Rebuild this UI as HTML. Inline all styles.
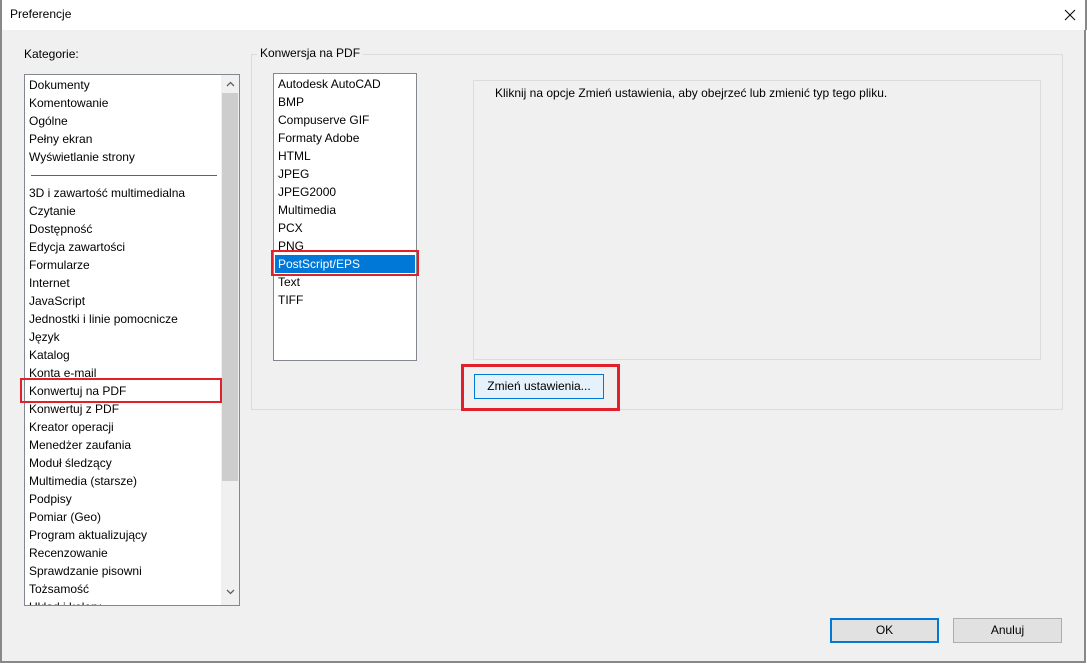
<!DOCTYPE html><html><head><style>
body{margin:0;width:1087px;height:664px;background:#fff;font-family:"Liberation Sans",sans-serif;font-size:12px;color:#000;position:relative;overflow:hidden}
div{position:absolute;box-sizing:border-box}
.it{position:absolute;left:4px;height:18px;line-height:18px;white-space:nowrap}
</style></head><body>
<div style="left:0;top:0;width:1087px;height:30px;background:#fff;border-left:2px solid #888;border-right:2px solid #888"></div>
<div style="left:10px;top:7px;">Preferencje</div>
<svg style="position:absolute;left:1064px;top:9px" width="12" height="12"><path d="M1 1L11 11M11 1L1 11" stroke="#000" stroke-width="1"/></svg>
<div style="left:0;top:30px;width:1086px;height:633px;background:#f0f0f0;border-left:2px solid #888;border-right:2px solid #888;border-bottom:2px solid #888"></div>
<div style="left:24px;top:47px">Kategorie:</div>
<div style="left:24px;top:74px;width:216px;height:532px;background:#fff;border:1px solid #828790;overflow:hidden">
<div style="left:196px;top:0;width:18px;height:530px;background:#f0f0f0"></div>
<div style="left:197px;top:18px;width:16px;height:388px;background:#cdcdcd"></div>
<svg style="position:absolute;left:201px;top:6px" width="9" height="6"><path d="M1 5L4.5 1.5L8 5" stroke="#606060" fill="none" stroke-width="1.3"/></svg>
<svg style="position:absolute;left:201px;top:514px" width="9" height="6"><path d="M1 1L4.5 4.5L8 1" stroke="#606060" fill="none" stroke-width="1.3"/></svg>
<div style="left:6px;top:100px;width:186px;height:1px;background:#3a6e91"></div>
<div class="it" style="top:1px">Dokumenty</div>
<div class="it" style="top:19px">Komentowanie</div>
<div class="it" style="top:37px">Ogólne</div>
<div class="it" style="top:55px">Pełny ekran</div>
<div class="it" style="top:73px">Wyświetlanie strony</div>
<div class="it" style="top:109px">3D i zawartość multimedialna</div>
<div class="it" style="top:127px">Czytanie</div>
<div class="it" style="top:145px">Dostępność</div>
<div class="it" style="top:163px">Edycja zawartości</div>
<div class="it" style="top:181px">Formularze</div>
<div class="it" style="top:199px">Internet</div>
<div class="it" style="top:217px">JavaScript</div>
<div class="it" style="top:235px">Jednostki i linie pomocnicze</div>
<div class="it" style="top:253px">Język</div>
<div class="it" style="top:271px">Katalog</div>
<div class="it" style="top:289px">Konta e-mail</div>
<div class="it" style="top:307px">Konwertuj na PDF</div>
<div class="it" style="top:325px">Konwertuj z PDF</div>
<div class="it" style="top:343px">Kreator operacji</div>
<div class="it" style="top:361px">Menedżer zaufania</div>
<div class="it" style="top:379px">Moduł śledzący</div>
<div class="it" style="top:397px">Multimedia (starsze)</div>
<div class="it" style="top:415px">Podpisy</div>
<div class="it" style="top:433px">Pomiar (Geo)</div>
<div class="it" style="top:451px">Program aktualizujący</div>
<div class="it" style="top:469px">Recenzowanie</div>
<div class="it" style="top:487px">Sprawdzanie pisowni</div>
<div class="it" style="top:505px">Tożsamość</div>
<div class="it" style="top:523px">Układ i kolory</div>
</div>
<div style="left:20px;top:378px;width:202px;height:25px;border:2px solid #e0202a"></div>
<div style="left:251px;top:54px;width:812px;height:356px;border:1px solid #dcdcdc"></div>
<div style="left:257px;top:46px;background:#f0f0f0;padding:0 3px">Konwersja na PDF</div>
<div style="left:273px;top:73px;width:144px;height:288px;background:#fff;border:1px solid #828790">
<div style="left:1px;top:181px;width:140px;height:18px;background:#0078d7"></div>
<div class="it" style="top:1px">Autodesk AutoCAD</div>
<div class="it" style="top:19px">BMP</div>
<div class="it" style="top:37px">Compuserve GIF</div>
<div class="it" style="top:55px">Formaty Adobe</div>
<div class="it" style="top:73px">HTML</div>
<div class="it" style="top:91px">JPEG</div>
<div class="it" style="top:109px">JPEG2000</div>
<div class="it" style="top:127px">Multimedia</div>
<div class="it" style="top:145px">PCX</div>
<div class="it" style="top:163px">PNG</div>
<div class="it" style="top:181px;color:#fff">PostScript/EPS</div>
<div class="it" style="top:199px">Text</div>
<div class="it" style="top:217px">TIFF</div>
</div>
<div style="left:271px;top:250px;width:148px;height:26px;border:2px solid #e0202a"></div>
<div style="left:473px;top:80px;width:568px;height:280px;border:1px solid #dcdcdc"></div>
<div style="left:495px;top:86px">Kliknij na opcje Zmień ustawienia, aby obejrzeć lub zmienić typ tego pliku.</div>
<div style="left:474px;top:374px;width:130px;height:25px;background:#e5f1fb;border:1px solid #0078d7;text-align:center;line-height:23px">Zmień ustawienia...</div>
<div style="left:461px;top:364px;width:159px;height:47px;border:3px solid #e0202a"></div>
<div style="left:830px;top:618px;width:109px;height:25px;background:#e1e1e1;border:2px solid #0078d7;text-align:center;line-height:21px">OK</div>
<div style="left:953px;top:618px;width:109px;height:25px;background:#e1e1e1;border:1px solid #adadad;text-align:center;line-height:23px">Anuluj</div>
</body></html>
